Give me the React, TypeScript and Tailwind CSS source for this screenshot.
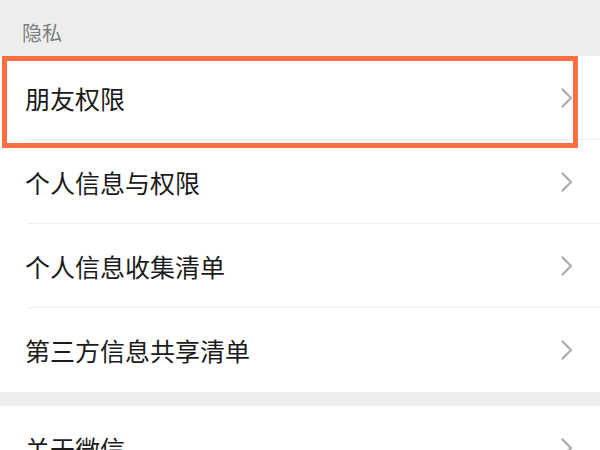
import React from "react";

const rows = ["朋友权限", "个人信息与权限", "个人信息收集清单", "第三方信息共享清单"];

function Chevron() {
    return (
        <svg width="12" height="20" viewBox="0 0 12 20" className="shrink-0">
            <polyline
                points="1.5,1.5 10,10 1.5,18.5"
                fill="none"
                stroke="#adadad"
                strokeWidth="2.4"
                strokeLinecap="round"
                strokeLinejoin="round"
            />
        </svg>
    );
}

function Row({ label, divider }: { label: string; divider: boolean }) {
    return (
        <div className="relative flex h-[84px] items-center justify-between bg-white pl-[25px] pr-[27px]">
            <span className="text-[25px] leading-none text-[#1a1a1a]">{label}</span>
            <Chevron />
            {divider && <div className="absolute bottom-[0px] left-[27px] right-0 h-px bg-[#efefef]" />}
        </div>
    );
}

export default function App() {
    return (
        <div
            className="relative h-[450px] w-[600px] overflow-hidden bg-[#ededed]"
            style={{ fontFamily: '"Noto Sans CJK SC", "Noto Sans", sans-serif' }}
        >
            {/* Section header */}
            <div className="flex h-[56px] items-center pt-[9px] pl-[22px]">
                <span className="text-[20px] leading-none text-[#7f7f7f]">隐私</span>
            </div>

            <div className="flex flex-col">
                {rows.map((r, i) => (
                    <Row key={r} label={r} divider={i < rows.length - 1} />
                ))}
            </div>

            <div className="h-[14px]" />

            <Row label="关于微信" divider={false} />

            {/* Highlight annotation */}
            <div className="absolute left-[2px] top-[56px] h-[92px] w-[576px] border-[5px] border-[#fb6f41]" />
        </div>
    );
}
